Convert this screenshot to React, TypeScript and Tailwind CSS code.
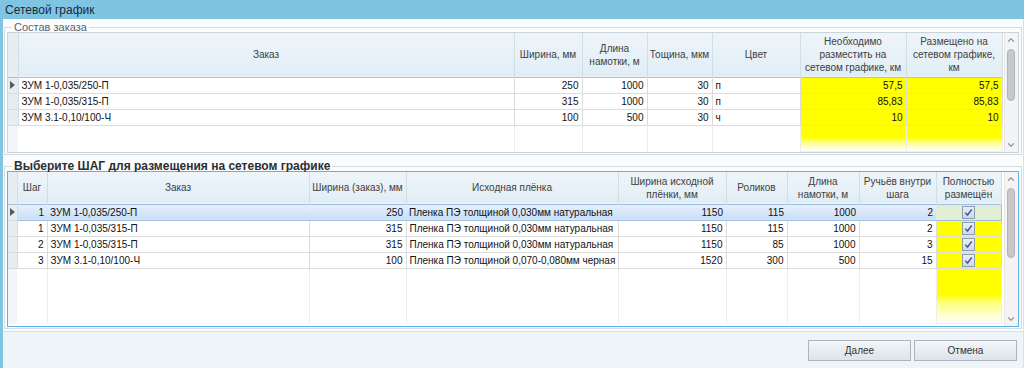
import { ChevronUp, ChevronDown } from 'lucide-react';

const ORDERS = [
  { name: 'ЗУМ 1-0,035/250-П', width: 250, len: 1000, thick: 30, color: 'п', need: '57,5', placed: '57,5' },
  { name: 'ЗУМ 1-0,035/315-П', width: 315, len: 1000, thick: 30, color: 'п', need: '85,83', placed: '85,83' },
  { name: 'ЗУМ 3.1-0,10/100-Ч', width: 100, len: 500, thick: 30, color: 'ч', need: '10', placed: '10' },
];

const STEPS = [
  { step: 1, name: 'ЗУМ 1-0,035/250-П', width: 250, film: 'Пленка ПЭ толщиной 0,030мм натуральная', filmWidth: 1150, rolls: 115, len: 1000, streams: 2 },
  { step: 1, name: 'ЗУМ 1-0,035/315-П', width: 315, film: 'Пленка ПЭ толщиной 0,030мм натуральная', filmWidth: 1150, rolls: 115, len: 1000, streams: 2 },
  { step: 2, name: 'ЗУМ 1-0,035/315-П', width: 315, film: 'Пленка ПЭ толщиной 0,030мм натуральная', filmWidth: 1150, rolls: 85, len: 1000, streams: 3 },
  { step: 3, name: 'ЗУМ 3.1-0,10/100-Ч', width: 100, film: 'Пленка ПЭ толщиной 0,070-0,080мм черная', filmWidth: 1520, rolls: 300, len: 500, streams: 15 },
];

const th = 'border-r border-[#d3dde4] font-normal text-[#404040] text-center align-middle leading-[13px] px-[2px]';
const td = 'border-r border-b border-[#dcdcdc] px-[3px] h-[16px] whitespace-nowrap overflow-hidden';
const fill = 'border-r border-[#eeeeee]';
const yellowFill = 'border-r border-[#eeeeee] bg-linear-to-b from-[#ffff00] from-50% to-white';

function Scrollbar({ thumb }: { thumb: string }) {
  return (
    <div className="w-[19px] flex flex-col items-center bg-[#f4f4f4] border-l border-[#e6e6e6] py-[2px]">
      <ChevronUp className="w-[10px] h-[10px] text-[#9a9a9a]" strokeWidth={3} />
      <div className={`w-[8px] ${thumb} mt-[4px] rounded-[4px] bg-[#c8c8c8] border border-[#b4b4b4]`} />
      <div className="flex-1" />
      <ChevronDown className="w-[10px] h-[10px] text-[#9a9a9a]" strokeWidth={3} />
    </div>
  );
}

function Check() {
  return (
    <div className="mx-auto w-[13px] h-[13px] border border-[#8e9cae] bg-linear-to-b from-[#e9eef4] to-[#cfd9e4] flex items-center justify-center">
      <svg viewBox="0 0 10 10" className="w-[9px] h-[9px]">
        <path d="M1.5 5.2 L4 7.8 L8.6 1.6" fill="none" stroke="#3b56a8" strokeWidth="1.6" />
      </svg>
    </div>
  );
}

function Arrow() {
  return <span className="inline-block w-0 h-0 border-y-[4px] border-y-transparent border-l-[5px] border-l-[#5a5a5a]" />;
}

export default function App() {
  return (
    <div className="w-[1024px] h-[368px] bg-[#80c4e4] flex flex-col overflow-hidden font-['Liberation_Sans',Arial,sans-serif] text-[10px] text-[#111]">
      <div className="h-[19px] flex items-center px-[5px] pt-[1px] text-[12px] text-[#1c2a36]">Сетевой график</div>

      <div className="flex-1 ml-[3px] flex flex-col bg-[#fbfcfd] border-r border-[#d8e2e8]">
        <fieldset className="mx-[1px] mt-[3px] border border-[#d3dce2] px-[2px] pb-[1px] min-w-0">
          <legend className="ml-[5px] px-[2px] text-[11px] text-[#5a646c] leading-[11px]">Состав заказа</legend>
          <div className="flex border border-[#c9d3da] bg-white h-[121px] mt-[-1px]">
            <table className="table-fixed border-collapse w-[994px] h-fit">
              <thead>
                <tr className="h-[44px] bg-linear-to-b from-[#eef5fa] to-[#e1edf5] border-b border-[#aebfcc]">
                  <th className={`${th} w-[10px] bg-[#e6eef3]`} />
                  <th className={`${th} w-[496px]`}>Заказ</th>
                  <th className={`${th} w-[68px]`}>Ширина, мм</th>
                  <th className={`${th} w-[65px]`}>Длина<br />намотки, м</th>
                  <th className={`${th} w-[65px]`}>Тощина, мкм</th>
                  <th className={`${th} w-[88px]`}>Цвет</th>
                  <th className={`${th} w-[106px]`}>Необходимо<br />разместить на<br />сетевом графике, км</th>
                  <th className={`${th} w-[96px]`}>Размещено на<br />сетевом графике,<br />км</th>
                </tr>
              </thead>
              <tbody>
                {ORDERS.map((o, i) => (
                  <tr key={o.name}>
                    <td className="border-r border-b border-[#d3dde4] bg-[#e6eef3] h-[16px] text-center p-0">{i === 0 && <Arrow />}</td>
                    <td className={td}>{o.name}</td>
                    <td className={`${td} text-right`}>{o.width}</td>
                    <td className={`${td} text-right`}>{o.len}</td>
                    <td className={`${td} text-right`}>{o.thick}</td>
                    <td className={td}>{o.color}</td>
                    <td className={`${td} text-right bg-[#ffff00]`}>{o.need}</td>
                    <td className={`${td} text-right bg-[#ffff00]`}>{o.placed}</td>
                  </tr>
                ))}
                <tr className="h-[27px]">
                  <td className="bg-[#f3f6f8]" />
                  <td className={fill} />
                  <td className={fill} />
                  <td className={fill} />
                  <td className={fill} />
                  <td className={fill} />
                  <td className={yellowFill} />
                  <td className={yellowFill} />
                </tr>
              </tbody>
            </table>
            <div className="w-[2px]" />
            <Scrollbar thumb="h-[52px]" />
          </div>
        </fieldset>

        <fieldset className="mx-[1px] mt-[5px] border border-[#d3dce2] px-[2px] pb-[1px] min-w-0">
          <legend className="ml-[5px] px-[2px] text-[12px] font-bold text-[#2a2f33] leading-[12px]">Выберите ШАГ для размещения на сетевом графике</legend>
          <div className="flex border border-[#5eb2e2] bg-white h-[156px] mt-[-1px]">
            <table className="table-fixed border-collapse w-[993px] h-fit">
              <thead>
                <tr className="h-[32px] bg-linear-to-b from-[#eef5fa] to-[#e1edf5] border-b border-[#aebfcc]">
                  <th className={`${th} w-[9px] bg-[#e6eef3]`} />
                  <th className={`${th} w-[30px]`}>Шаг</th>
                  <th className={`${th} w-[262px]`}>Заказ</th>
                  <th className={`${th} w-[97px]`}>Ширина (заказ), мм</th>
                  <th className={`${th} w-[212px]`}>Исходная плёнка</th>
                  <th className={`${th} w-[108px]`}>Ширина исходной<br />плёнки, мм</th>
                  <th className={`${th} w-[61px]`}>Роликов</th>
                  <th className={`${th} w-[72px]`}>Длина<br />намотки, м</th>
                  <th className={`${th} w-[77px]`}>Ручьёв внутри<br />шага</th>
                  <th className={`${th} w-[65px]`}>Полностью<br />размещён</th>
                </tr>
              </thead>
              <tbody>
                {STEPS.map((s, i) => {
                  const sel = i === 0;
                  const c = sel
                    ? 'px-[3px] h-[16px] whitespace-nowrap overflow-hidden bg-linear-to-b from-[#e6f0fb] to-[#c9def5] border-y border-[#9ebde0]'
                    : td;
                  return (
                    <tr key={i}>
                      <td className="border-r border-b border-[#d3dde4] bg-[#e6eef3] h-[16px] text-center p-0">{sel && <Arrow />}</td>
                      <td className={`${c} text-right ${sel ? 'border-l rounded-l-[3px]' : ''}`}>{s.step}</td>
                      <td className={c}>{s.name}</td>
                      <td className={`${c} text-right`}>{s.width}</td>
                      <td className={c}>{s.film}</td>
                      <td className={`${c} text-right`}>{s.filmWidth}</td>
                      <td className={`${c} text-right`}>{s.rolls}</td>
                      <td className={`${c} text-right`}>{s.len}</td>
                      <td className={`${c} text-right`}>{s.streams}</td>
                      <td className={`${sel ? 'h-[16px] bg-[#e3efd4] border-y border-r border-[#9ebde0]' : `${td} bg-[#ffff00]`} p-0`}><Check /></td>
                    </tr>
                  );
                })}
                <tr className="h-[56px]">
                  <td className="bg-[#f3f6f8]" />
                  <td className={fill} />
                  <td className={fill} />
                  <td className={fill} />
                  <td className={fill} />
                  <td className={fill} />
                  <td className={fill} />
                  <td className={fill} />
                  <td className={fill} />
                  <td className={yellowFill} />
                </tr>
              </tbody>
            </table>
            <div className="w-[3px]" />
            <Scrollbar thumb="h-[70px]" />
          </div>
        </fieldset>

        <div className="flex-1 mt-[2px] border-t border-[#d6dfe5] bg-[#eef4f8] flex items-start justify-end gap-[3px] pr-[6px] pt-[8px]">
          <button className="w-[103px] h-[21px] border border-[#aab4bc] bg-linear-to-b from-[#f4f6f8] to-[#dde3e8] text-[10px] text-[#333]">Далее</button>
          <button className="w-[103px] h-[21px] border border-[#aab4bc] bg-linear-to-b from-[#f4f6f8] to-[#dde3e8] text-[10px] text-[#333]">Отмена</button>
        </div>
      </div>
    </div>
  );
}
